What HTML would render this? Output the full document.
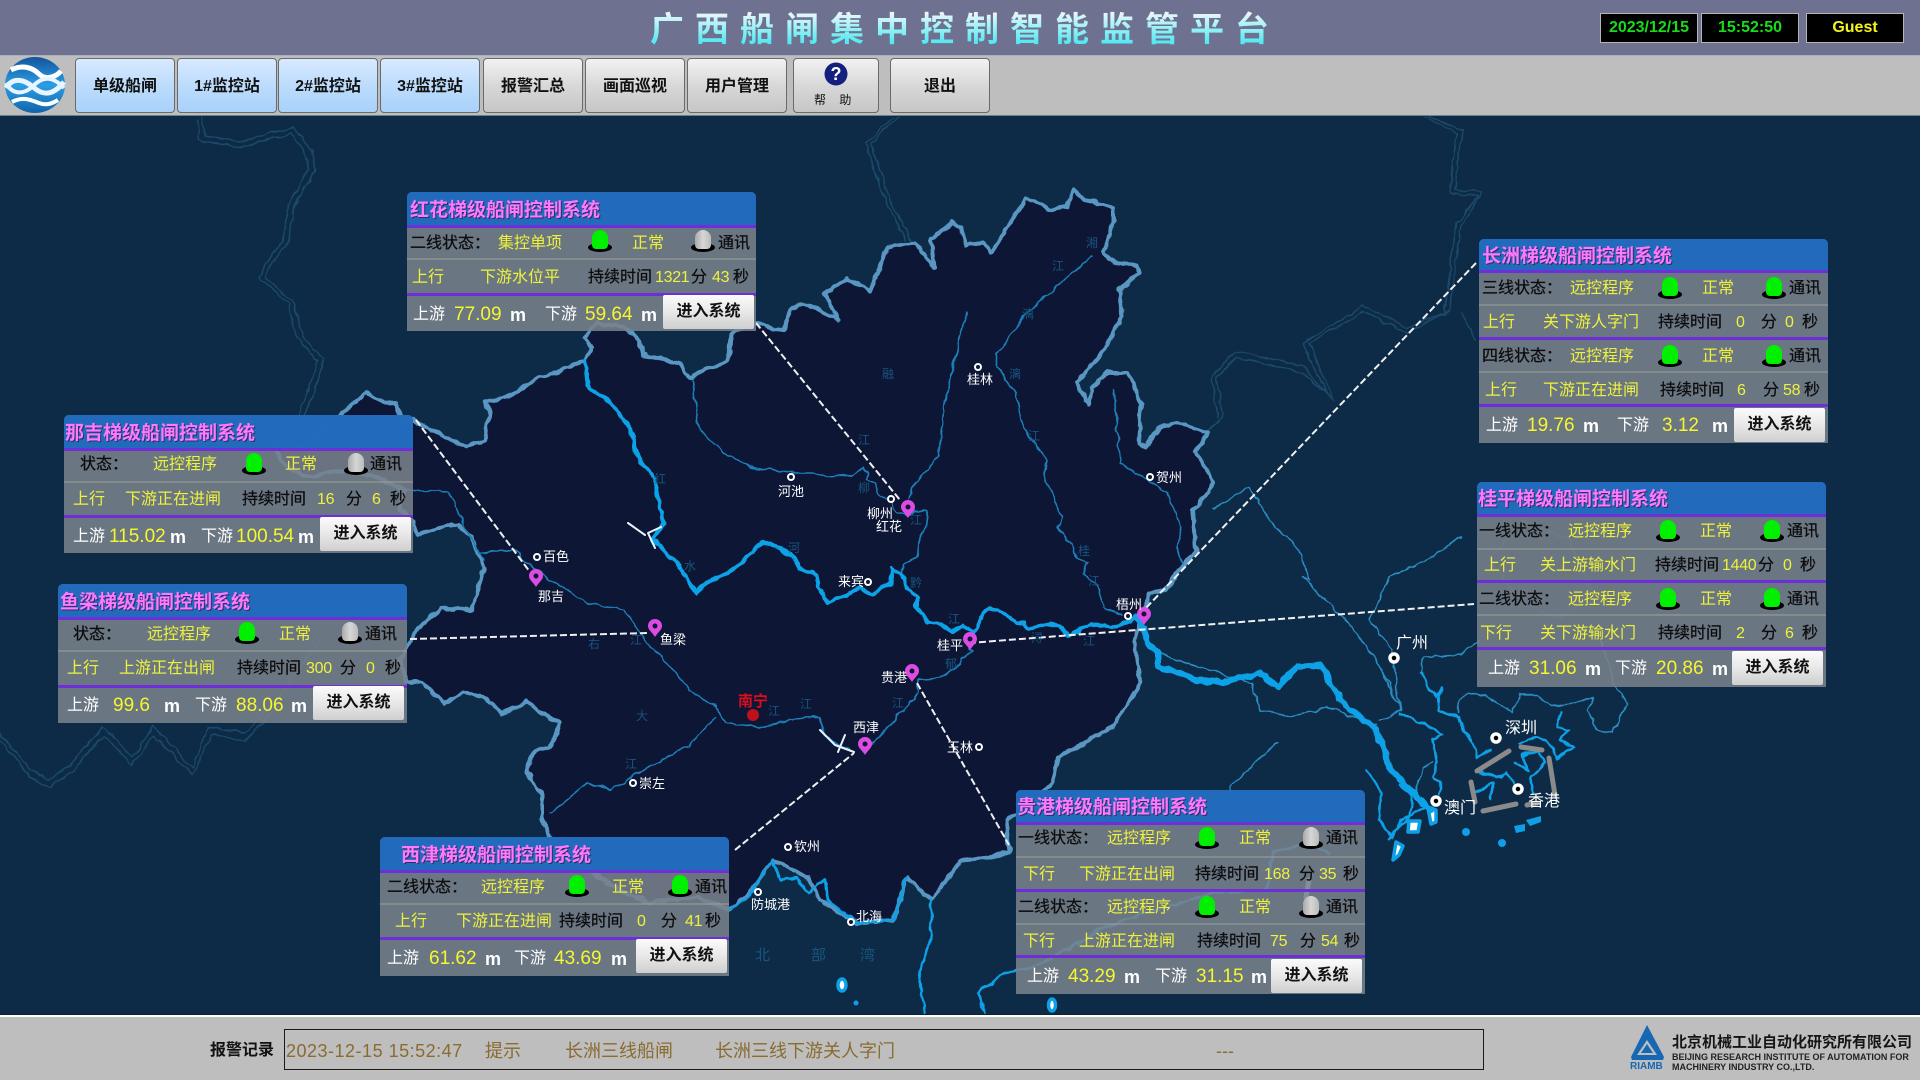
<!DOCTYPE html>
<html lang="zh-CN"><head><meta charset="utf-8"><title>广西船闸集中控制智能监管平台</title>
<style>
*{box-sizing:border-box}
html,body{margin:0;padding:0;width:1920px;height:1080px;overflow:hidden;background:#0d2b47;font-family:"Liberation Sans","Noto Sans CJK SC",sans-serif}
.abs{position:absolute}
#hd{position:absolute;left:0;top:0;width:1920px;height:55px;background:#6e7290}
#ttl{position:absolute;left:650px;top:7px;font:700 34px/46px "Liberation Sans","Noto Sans CJK SC",sans-serif;letter-spacing:11px;white-space:nowrap;background:linear-gradient(#e4f7fb 15%,#8ff0f5 50%,#2fe3ef 95%);-webkit-background-clip:text;background-clip:text;color:transparent}
.tb{position:absolute;top:13px;height:30px;width:98px;background:#000;border:1px solid #b5b5b5;text-align:center;font:700 16px/28px "Liberation Sans",sans-serif}
#bar{position:absolute;left:0;top:55px;width:1920px;height:61px;background:#bebebe;border-top:1px solid #aab0c0;border-bottom:1px solid #6f7f8c}
.btn{position:absolute;top:58px;height:55px;width:100px;border:1px solid #6a6a6a;border-radius:4px;text-align:center;font:700 16px/55px "Liberation Sans","Noto Sans CJK SC",sans-serif;color:#111;background:linear-gradient(#f2f2f2,#d8d8d8 50%,#c6c6c6)}
.bl{background:linear-gradient(#d8eaff,#bcdcfc 50%,#a9d1fa)}
#ft{position:absolute;left:0;top:1015px;width:1920px;height:65px;background:#bebebe;border-top:2px solid #fff}
#ft:before{content:"";position:absolute;left:0;top:-3px;width:100%;height:1px;background:#10202e}
.alm{position:absolute;top:1040px;font-size:18px;line-height:22px;color:#8a6b30;white-space:nowrap}
.p{position:absolute;width:349px;background:rgba(122,130,140,.87);border-radius:5px 5px 0 0;color:#111}
.h{position:absolute;left:0;top:0;width:100%;background:rgba(32,106,190,.97);border-radius:5px 5px 0 0}
.tt{position:absolute;top:7px;font:700 19px/24px "Liberation Sans","Noto Sans CJK SC",sans-serif;color:#ff78ff;text-shadow:1px 1px 0 #2c2f60;white-space:nowrap}
.pl{position:absolute;left:0;width:100%;height:3px;background:#6f2fd8}
.fl{position:absolute;left:0;width:100%;height:2px;background:rgba(150,155,150,.6)}
.r{position:absolute;left:0;width:100%;height:20px}
.r i{position:absolute;top:1px;font-style:normal;font-size:16px;line-height:20px;white-space:nowrap}
.k{color:#0c0c0c;-webkit-text-stroke:.25px #0c0c0c}.y{color:#eef23a}
.r i.s{font-size:16px;color:#0c0c0c;-webkit-text-stroke:.25px #0c0c0c}
.r i.n{font-size:16px;letter-spacing:-.3px;color:#eef23a}
.r i.w{top:2px;color:#fff;font-size:16px}
.r i.v{top:2px;color:#f6f62e;font-size:19px}
.r i.m{top:2px;color:#fff;font-weight:700;font-size:18px}
.l{position:absolute;top:-1px;width:24px;height:24px}
.l:before{content:"";position:absolute;left:0;top:13px;width:24px;height:9px;border-radius:50%;background:#000}
.l:after{content:"";position:absolute;left:4px;top:0;width:16px;height:19px;border-radius:8px 8px 4px 4px;background:#00f000}
.l.o:after{background:linear-gradient(90deg,#aaa,#d6d6d6 50%,#bbb)}
.e{position:absolute;width:91px;height:34px;background:linear-gradient(#fbfbfb,#e8e8e8 50%,#cfcfcf);border-radius:2px;text-align:center;font:700 16px/34px "Liberation Sans","Noto Sans CJK SC",sans-serif;color:#111}
svg text{font-family:"Liberation Sans","Noto Sans CJK SC",sans-serif}
</style></head><body>

<svg class="abs" style="left:0;top:0" width="1920" height="1080" viewBox="0 0 1920 1080" fill="none" stroke-linejoin="round" stroke-linecap="round">
<defs>
<filter id="bump" filterUnits="userSpaceOnUse" x="0" y="100" width="1920" height="930"><feTurbulence type="fractalNoise" baseFrequency=".09" numOctaves="2" seed="4"/><feDisplacementMap in="SourceGraphic" scale="6" xChannelSelector="R" yChannelSelector="G"/></filter>
</defs>
<!-- faint neighbours -->
<g stroke="#1b4a68" stroke-width="1.5" filter="url(#bump)">
<path d="M202 117L205 135 239 142 294 127 312 153 315 170 294 207 288 243 269 267 265 277 294 303 303 337 324 360 318 380 300 430"/>
<path d="M197 120L200 140 239 148 292 133 306 155 309 170 288 207 282 243 263 267 259 277 288 303 297 337 318 362 312 380 294 430"/>
<path d="M894 117L866 143 882 193 906 240"/><path d="M899 117L871 143 887 193 911 240"/>
<path d="M1425 117L1456 133 1450 193 1477 197 1456 223 1444 313 1407 333 1364 312 1309 343 1333 400 1303 373 1236 357 1217 377 1223 417 1208 430"/>
<path d="M1430 117L1462 130 1455 190 1482 192 1461 225 1449 310 1407 328 1364 306 1303 343 1327 395 1303 366 1236 351 1212 377 1218 417"/>
<path d="M0 733L30 770 49 780 67 767 104 727 132 757 153 727 193 767 208 727 245 733 275 703 320 640"/>
<path d="M0 740L30 777 49 787 72 772 104 735 132 765 153 735 193 775 212 735 245 741 280 705"/>
<path d="M1520 520L1570 540 1590 590 1560 620 1520 600 1490 560 1530 510"/>
<path d="M1462 313L1474 340"/>
</g>
<!-- Guangxi -->
<path filter="url(#bump)" fill="#0b1836" stroke="#5a96c2" stroke-width="4" d="M272 443 290 438 300 448 325 430 346 410 367 392 383 403 395 402 401 417 416 422 438 433 465 447 484 440 490 410 484 402 508 397 539 378 557 372 585 360 591 348 585 337 597 323 625 327 640 340 643 355 680 363 689 378 713 367 729 360 732 333 753 323 784 330 790 310 802 303 839 320 824 293 848 278 870 290 888 247 915 243 934 267 931 240 952 222 960 227 966 245 984 243 991 253 1021 207 1027 198 1049 210 1067 207 1073 190 1085 200 1113 207 1113 223 1104 253 1113 263 1138 265 1138 273 1119 290 1122 317 1104 350 1076 383 1089 405 1092 387 1107 373 1128 373 1141 403 1138 443 1147 447 1159 427 1177 423 1208 432 1196 453 1214 483 1193 510 1196 550 1180 570 1165 590 1150 593 1141 617 1135 643 1141 683 1113 727 1058 757 1052 783 1021 813 1006 820 1009 853 991 857 960 862 931 900 906 877 894 920 857 923 820 900 808 877 772 860 753 890 729 910 698 897 649 902 625 893 588 870 551 838 542 820 542 793 527 773 533 753 551 747 560 723 542 713 527 702 502 713 484 697 462 693 444 703 423 683 407 682 400 660 416 630 441 608 471 610 481 580 484 567 471 537 459 525 441 527 416 535 413 523 400 510 404 490 380 478 340 470 306 477 285 465Z"/>
<!-- internal rivers -->
<g stroke="#1f7fb8" stroke-width="1.6" filter="url(#bump)">
<path d="M692 380 698 427 723 453 753 467 790 472 813 472 827 477 853 475 863 467 868 472 867 480 875 483 878 493 892 503 895 512 908 517 915 510 927 512 925 527 920 537 918 557 903 565 902 573"/>
<path d="M967 312 955 360 945 400 940 440 940 455 927 470 912 487 908 498"/>
<path d="M1092 257 1064 280 1027 313 997 353 997 367 1015 393 1021 420 1032 440 1047 460 1043 473 1062 517 1058 528 1075 550 1077 558 1088 563 1083 573 1100 590 1103 607 1122 615"/>
<path d="M1113 390 1118 440 1120 463 1143 477 1167 493 1182 527 1177 547 1182 565"/>
<path d="M970 650 973 653 962 657 957 667 940 678 918 680 918 693 876 740 865 748"/>
<path d="M404 490 450 492 466 530 484 560"/>
<path d="M478 553 514 550 536 570 551 580 588 603 625 610 645 640 667 663 690 690 716 707 726 723 759 727 790 720 820 717 824 737 850 750"/>
<path d="M716 717 690 745 667 757 637 773 612 790 588 783 551 813"/>
</g>
<!-- outer east rivers -->
<g stroke="#2a8cc0" stroke-width="1.5" filter="url(#bump)">
<path d="M1214 508 1248 487 1275 527 1300 550 1309 580 1303 577 1327 603 1352 627 1376 660 1401 710"/>
<path d="M1462 537 1432 557 1389 577 1370 620 1392 650 1400 710"/>
<path d="M1160 653 1200 668 1251 683 1260 710 1291 717 1327 707 1376 725"/>
<path d="M1278 742 1229 787 1236 813"/>
<path d="M1380 668 1390 683 1400 710 1380 720"/>
<path d="M1420 672 1425 657 1460 655 1480 640"/>
<path d="M1433 762 1423 768 1415 793M1380 733 1393 767"/>
<path d="M1457 713 1458 703 1467 693 1487 697 1512 712 1520 695 1537 695 1550 707 1577 703 1593 697 1587 710 1597 730 1613 732 1627 703 1613 683 1610 667 1600 640"/>
</g>
<!-- bright coast & delta -->
<g stroke="#0ea0e6" stroke-width="2.6" filter="url(#bump)">
<path d="M729 910 745 900 753 890 772 860 780 880 796 877 808 893 824 880 827 900 857 923 894 920 906 877"/>
<path d="M931 900 931 937 919 973 925 1013"/>
<path d="M984 1015 978 993 1000 975 1040 965 1104 927 1144 913 1217 893 1266 890 1272 853 1303 843 1330 853"/>
<path d="M1367 770 1382 793 1379 820 1392 837 1401 820 1425 807"/>
<path d="M1422 672 1430 690 1437 697 1442 688 1437 710 1458 718 1475 750 1477 758 1490 750"/>
<path d="M1400 713 1420 722 1442 735 1433 740 1437 763 1433 777 1442 783 1438 795"/>
<path d="M1400 785 1412 797 1410 817 1388 838"/>
<path d="M1562 712 1557 728 1568 730 1560 740 1573 747 1557 758 1547 740 1537 737 1520 743"/>
<path d="M1480 772 1497 778 1507 773 1513 783M1475 793 1493 783 1490 798M1515 762 1527 770 1522 755 1537 752 1545 763 1530 777 1533 793"/>
</g>
<path d="M1309 880 1306 897" stroke="#cfe6f5" stroke-width="5"/>
<!-- islands -->
<g fill="#fff" stroke="#0ea0e6" stroke-width="3.5">
<path d="M1428 808 1436 810 1436 822 1431 824Z"/><path d="M1409 821 1420 821 1418 832 1408 832Z"/><path d="M1396 842 1403 846 1399 855 1393 860Z"/><ellipse cx="842" cy="985" rx="4" ry="6"/><ellipse cx="1052" cy="1005" rx="3.5" ry="6"/>
</g>
<g fill="#0ea0e6"><circle cx="1466" cy="832" r="4"/><circle cx="1502" cy="843" r="4"/><path d="M1514 826 1525 824 1525 831 1516 833Z"/><path d="M1526 820 1541 816 1541 822 1530 826Z"/><circle cx="856" cy="1003" r="2.5"/></g>
<!-- main river -->
<g stroke="#0ba2e8" filter="url(#bump)">
<path stroke-width="4" d="M585 360 588 387 612 403 631 430 637 457 655 480 658 497 664 523 652 540 680 567 695 592 716 577 729 573 744 560 762 542 780 548 788 553 800 568 817 575 818 587 828 603 860 588 872 595 890 583 892 568 905 578 908 590 917 597 917 607 928 623 942 625 953 632 963 625 972 633 975 630 988 608 997 610 1003 613 1017 622 1025 623 1028 630 1052 624 1063 628 1068 637 1080 630 1095 624 1110 628 1137 618"/>
<path stroke-width="6" d="M1137 618 1143 627 1148 643 1158 653 1158 667 1180 673 1200 680 1223 682 1260 673 1278 687 1297 667 1321 665 1340 700 1376 730 1389 767 1413 793 1431 810"/>
</g>
<path stroke="#e8f6ff" stroke-width="2" d="M628 523 645 535M661 527 648 533 655 548M820 730 835 745 854 752M838 752 845 735"/>
<!-- hk grey -->
<g stroke="#8a8a8a" stroke-width="5"><path d="M1477 771 1509 751M1521 747 1542 750M1549 758 1555 795M1471 782 1475 802M1483 811 1516 804M1527 805 1537 803"/></g>
<!-- dashed -->
<g stroke="#f0f0f0" stroke-width="2" stroke-dasharray="7 3" stroke-linecap="butt">
<path d="M756 323 900 500M416 420 530 572M410 639 649 633M735 850 854 753M917 683 1009 845M969 643 1474 604M1476 263 1144 610"/>
</g>
<!-- pins -->
<g fill="#dc4be2">
<path transform="translate(908 518)" d="M0 0C-3-5-7-7-7-11a7 7 0 1 1 14 0C7-7 3-5 0 0Z"/>
<path transform="translate(536 587)" d="M0 0C-3-5-7-7-7-11a7 7 0 1 1 14 0C7-7 3-5 0 0Z"/>
<path transform="translate(655 637)" d="M0 0C-3-5-7-7-7-11a7 7 0 1 1 14 0C7-7 3-5 0 0Z"/>
<path transform="translate(970 650)" d="M0 0C-3-5-7-7-7-11a7 7 0 1 1 14 0C7-7 3-5 0 0Z"/>
<path transform="translate(1144 625)" d="M0 0C-3-5-7-7-7-11a7 7 0 1 1 14 0C7-7 3-5 0 0Z"/>
<path transform="translate(912 682)" d="M0 0C-3-5-7-7-7-11a7 7 0 1 1 14 0C7-7 3-5 0 0Z"/>
<path transform="translate(865 755)" d="M0 0C-3-5-7-7-7-11a7 7 0 1 1 14 0C7-7 3-5 0 0Z"/>
</g>
<g fill="#0b1836"><circle cx="908" cy="507" r="2.5"/><circle cx="536" cy="576" r="2.5"/><circle cx="655" cy="626" r="2.5"/><circle cx="970" cy="639" r="2.5"/><circle cx="1144" cy="614" r="2.5"/><circle cx="912" cy="671" r="2.5"/><circle cx="865" cy="744" r="2.5"/></g>
<!-- city dots -->
<g fill="#0b1836" stroke="#fff" stroke-width="2">
<circle cx="537" cy="557" r="3"/><circle cx="791" cy="477" r="3"/><circle cx="891" cy="499" r="3"/><circle cx="978" cy="367" r="3"/><circle cx="1150" cy="477" r="3"/><circle cx="868" cy="582" r="3"/><circle cx="633" cy="783" r="3"/><circle cx="788" cy="847" r="3"/><circle cx="758" cy="892" r="3"/><circle cx="851" cy="922" r="3"/><circle cx="979" cy="747" r="3"/><circle cx="1128" cy="616" r="3"/>
</g>
<g fill="#000" stroke="#fff" stroke-width="3.5"><circle cx="1394" cy="658" r="4"/><circle cx="1496" cy="738" r="4"/><circle cx="1518" cy="789" r="4"/><circle cx="1436" cy="801" r="4"/></g>
<circle cx="753" cy="715" r="6" fill="#c0101c"/>
<!-- labels -->
<g fill="#fff" font-size="13">
<text x="543" y="561">百色</text><text x="778" y="496">河池</text><text x="867" y="518">柳州</text><text x="876" y="531">红花</text><text x="967" y="384">桂林</text><text x="1156" y="482">贺州</text><text x="838" y="586">来宾</text><text x="538" y="601">那吉</text><text x="660" y="644">鱼梁</text><text x="853" y="732">西津</text><text x="881" y="682">贵港</text><text x="937" y="650">桂平</text><text x="639" y="788">崇左</text><text x="794" y="851">钦州</text><text x="751" y="909">防城港</text><text x="856" y="921">北海</text><text x="947" y="752">玉林</text><text x="1116" y="609">梧州</text>
</g>
<g fill="#fff" font-size="16"><text x="1396" y="648">广州</text><text x="1505" y="733">深圳</text><text x="1528" y="806">香港</text><text x="1444" y="813">澳门</text></g>
<text x="738" y="706" fill="#e00c1c" font-size="15" font-weight="700">南宁</text>
<g fill="#17557f" font-size="12">
<text x="654" y="483">红</text><text x="684" y="570">水</text><text x="788" y="552">河</text><text x="858" y="492">柳</text><text x="910" y="524">江</text><text x="910" y="587">黔</text><text x="948" y="623">江</text><text x="1031" y="642">浔</text><text x="1083" y="645">江</text><text x="1078" y="555">桂</text><text x="1088" y="585">江</text><text x="1086" y="247">湘</text><text x="1052" y="270">江</text><text x="1022" y="318">漓</text><text x="1009" y="378">漓</text><text x="1028" y="440">江</text><text x="882" y="378">融</text><text x="858" y="444">江</text><text x="588" y="648">右</text><text x="636" y="720">大</text><text x="625" y="768">江</text><text x="630" y="644">江</text><text x="768" y="715">江</text><text x="800" y="708">江</text><text x="945" y="668">郁</text><text x="892" y="707">江</text>
</g>
<g fill="#17557f" font-size="15"><text x="755" y="960">北</text><text x="811" y="960">部</text><text x="860" y="960">湾</text></g>
</svg>

<div id="hd"></div>
<div id="ttl">广西船闸集中控制智能监管平台</div>
<div class="tb" style="left:1600px;color:#19dc19">2023/12/15</div>
<div class="tb" style="left:1701px;color:#19dc19">15:52:50</div>
<div class="tb" style="left:1806px;color:#f4f41c">Guest</div>

<div id="bar"></div>
<svg class="abs" style="left:3px;top:56px" width="66" height="58" viewBox="0 0 66 58">
<defs><linearGradient id="lg" x1="0" y1="0" x2="0" y2="1"><stop offset="0" stop-color="#14549c"/><stop offset=".5" stop-color="#2a9ee4"/><stop offset="1" stop-color="#1264ac"/></linearGradient></defs>
<ellipse cx="32" cy="29" rx="30" ry="28" fill="url(#lg)"/>
<path d="M8 14C20 8 30 12 36 18S52 22 58 15" stroke="#fff" stroke-width="5" fill="none"/>
<path d="M3 32C10 20 22 24 30 31S48 42 61 26" stroke="#e8f4ff" stroke-width="5" fill="none"/>
<path d="M3 27C10 40 22 38 30 30S48 18 61 32" stroke="#e8f4ff" stroke-width="4" fill="none"/>
<path d="M9 46C20 40 28 44 36 47S50 47 55 44" stroke="#fff" stroke-width="4" fill="none"/>
</svg>
<div class="btn bl" style="left:75px">单级船闸</div>
<div class="btn bl" style="left:177px">1#监控站</div>
<div class="btn bl" style="left:278px">2#监控站</div>
<div class="btn bl" style="left:380px">3#监控站</div>
<div class="btn" style="left:483px">报警汇总</div>
<div class="btn" style="left:585px">画面巡视</div>
<div class="btn" style="left:687px">用户管理</div>
<div class="btn" style="left:793px;width:86px"></div>
<svg class="abs" style="left:823px;top:62px" width="26" height="24" viewBox="0 0 26 24"><circle cx="13" cy="12" r="11.5" fill="#14207e"/><text x="13" y="18" text-anchor="middle" fill="#fff" font-size="18" font-weight="700" style="font-family:'Liberation Sans',sans-serif">?</text></svg>
<div class="abs" style="left:814px;top:92px;font-size:12px;line-height:16px;color:#111;white-space:nowrap">帮&nbsp;&nbsp;&nbsp;&nbsp;助</div>
<div class="btn" style="left:890px">退出</div>

<!-- 红花 -->
<div class="p" style="left:407px;top:192px;height:139px"><div class="h" style="height:33px"></div><div class="tt" style="left:3px">红花梯级船闸控制系统</div><div class="pl" style="top:33px"></div><div class="fl" style="top:66px"></div><div class="pl" style="top:101px"></div>
<div class="r" style="top:41px"><i class="s" style="left:3px">二线状态：</i><i class="y" style="left:91px">集控单项</i><b class="l" style="left:181px;top:-3px"></b><i class="y" style="left:225px">正常</i><b class="l o" style="left:284px;top:-3px"></b><i class="s" style="left:311px">通讯</i></div>
<div class="r" style="top:75px"><i class="y" style="left:5px">上行</i><i class="y" style="left:73px">下游水位平</i><i class="k" style="left:181px">持续时间</i><i class="n" style="left:248px">1321</i><i class="k" style="left:284px">分</i><i class="n" style="left:305px">43</i><i class="k" style="left:326px">秒</i></div>
<div class="r" style="top:111px"><i class="w" style="left:6px">上游</i><i class="v" style="left:47px">77.09</i><i class="m" style="left:103px">m</i><i class="w" style="left:138px">下游</i><i class="v" style="left:178px">59.64</i><i class="m" style="left:234px">m</i></div>
<div class="e" style="left:256px;top:103px">进入系统</div></div>

<!-- 那吉 -->
<div class="p" style="left:64px;top:415px;height:138px"><div class="h" style="height:33px"></div><div class="tt" style="left:1px">那吉梯级船闸控制系统</div><div class="pl" style="top:33px"></div><div class="fl" style="top:66px"></div><div class="pl" style="top:100px"></div>
<div class="r" style="top:39px"><i class="s" style="left:16px">状态：</i><i class="y" style="left:89px">远控程序</i><b class="l" style="left:178px"></b><i class="y" style="left:221px">正常</i><b class="l o" style="left:280px"></b><i class="s" style="left:306px">通讯</i></div>
<div class="r" style="top:74px"><i class="y" style="left:9px">上行</i><i class="y" style="left:61px">下游正在进闸</i><i class="k" style="left:178px">持续时间</i><i class="n" style="left:253px">16</i><i class="k" style="left:282px">分</i><i class="n" style="left:308px">6</i><i class="k" style="left:326px">秒</i></div>
<div class="r" style="top:110px"><i class="w" style="left:9px">上游</i><i class="v" style="left:45px">115.02</i><i class="m" style="left:106px">m</i><i class="w" style="left:137px">下游</i><i class="v" style="left:172px">100.54</i><i class="m" style="left:234px">m</i></div>
<div class="e" style="left:256px;top:102px">进入系统</div></div>

<!-- 鱼梁 -->
<div class="p" style="left:58px;top:584px;height:139px"><div class="h" style="height:33px"></div><div class="tt" style="left:2px">鱼梁梯级船闸控制系统</div><div class="pl" style="top:33px"></div><div class="fl" style="top:66px"></div><div class="pl" style="top:101px"></div>
<div class="r" style="top:40px"><i class="s" style="left:15px">状态：</i><i class="y" style="left:89px">远控程序</i><b class="l" style="left:177px;top:-2px"></b><i class="y" style="left:221px">正常</i><b class="l o" style="left:280px;top:-2px"></b><i class="s" style="left:307px">通讯</i></div>
<div class="r" style="top:74px"><i class="y" style="left:9px">上行</i><i class="y" style="left:61px">上游正在出闸</i><i class="k" style="left:179px">持续时间</i><i class="n" style="left:248px">300</i><i class="k" style="left:282px">分</i><i class="n" style="left:308px">0</i><i class="k" style="left:327px">秒</i></div>
<div class="r" style="top:110px"><i class="w" style="left:9px">上游</i><i class="v" style="left:55px">99.6</i><i class="m" style="left:106px">m</i><i class="w" style="left:137px">下游</i><i class="v" style="left:178px">88.06</i><i class="m" style="left:233px">m</i></div>
<div class="e" style="left:255px;top:102px">进入系统</div></div>

<!-- 西津 -->
<div class="p" style="left:380px;top:837px;height:139px"><div class="h" style="height:33px"></div><div class="tt" style="left:21px">西津梯级船闸控制系统</div><div class="pl" style="top:33px"></div><div class="fl" style="top:66px"></div><div class="pl" style="top:100px"></div>
<div class="r" style="top:40px"><i class="s" style="left:7px">二线状态：</i><i class="y" style="left:101px">远控程序</i><b class="l" style="left:185px;top:-2px"></b><i class="y" style="left:232px">正常</i><b class="l" style="left:288px;top:-2px"></b><i class="s" style="left:315px">通讯</i></div>
<div class="r" style="top:74px"><i class="y" style="left:15px">上行</i><i class="y" style="left:76px">下游正在进闸</i><i class="k" style="left:179px">持续时间</i><i class="n" style="left:257px">0</i><i class="k" style="left:281px">分</i><i class="n" style="left:305px">41</i><i class="k" style="left:325px">秒</i></div>
<div class="r" style="top:110px"><i class="w" style="left:7px">上游</i><i class="v" style="left:49px">61.62</i><i class="m" style="left:105px">m</i><i class="w" style="left:134px">下游</i><i class="v" style="left:174px">43.69</i><i class="m" style="left:231px">m</i></div>
<div class="e" style="left:256px;top:102px">进入系统</div></div>

<!-- 长洲 -->
<div class="p" style="left:1479px;top:239px;height:204px"><div class="h" style="height:32px"></div><div class="tt" style="left:3px;top:6px">长洲梯级船闸控制系统</div><div class="pl" style="top:31px"></div><div class="fl" style="top:65px"></div><div class="pl" style="top:98px"></div><div class="fl" style="top:132px"></div><div class="pl" style="top:165px"></div>
<div class="r" style="top:39px"><i class="s" style="left:3px">三线状态：</i><i class="y" style="left:91px">远控程序</i><b class="l" style="left:179px"></b><i class="y" style="left:223px">正常</i><b class="l" style="left:283px"></b><i class="s" style="left:310px">通讯</i></div>
<div class="r" style="top:73px"><i class="y" style="left:4px">上行</i><i class="y" style="left:64px">关下游人字门</i><i class="k" style="left:179px">持续时间</i><i class="n" style="left:257px">0</i><i class="k" style="left:282px">分</i><i class="n" style="left:306px">0</i><i class="k" style="left:323px">秒</i></div>
<div class="r" style="top:107px"><i class="s" style="left:3px">四线状态：</i><i class="y" style="left:91px">远控程序</i><b class="l" style="left:179px"></b><i class="y" style="left:223px">正常</i><b class="l" style="left:283px"></b><i class="s" style="left:310px">通讯</i></div>
<div class="r" style="top:141px"><i class="y" style="left:6px">上行</i><i class="y" style="left:64px">下游正在进闸</i><i class="k" style="left:181px">持续时间</i><i class="n" style="left:258px">6</i><i class="k" style="left:284px">分</i><i class="n" style="left:304px">58</i><i class="k" style="left:325px">秒</i></div>
<div class="r" style="top:175px"><i class="w" style="left:7px">上游</i><i class="v" style="left:48px">19.76</i><i class="m" style="left:104px">m</i><i class="w" style="left:138px">下游</i><i class="v" style="left:183px">3.12</i><i class="m" style="left:233px">m</i></div>
<div class="e" style="left:255px;top:169px">进入系统</div></div>

<!-- 桂平 -->
<div class="p" style="left:1477px;top:482px;height:205px"><div class="h" style="height:32px"></div><div class="tt" style="left:1px;top:6px">桂平梯级船闸控制系统</div><div class="pl" style="top:32px"></div><div class="fl" style="top:66px"></div><div class="pl" style="top:98px"></div><div class="fl" style="top:132px"></div><div class="pl" style="top:165px"></div>
<div class="r" style="top:39px"><i class="s" style="left:2px">一线状态：</i><i class="y" style="left:91px">远控程序</i><b class="l" style="left:179px"></b><i class="y" style="left:223px">正常</i><b class="l" style="left:283px"></b><i class="s" style="left:310px">通讯</i></div>
<div class="r" style="top:73px"><i class="y" style="left:7px">上行</i><i class="y" style="left:63px">关上游输水门</i><i class="k" style="left:178px">持续时间</i><i class="n" style="left:245px">1440</i><i class="k" style="left:281px">分</i><i class="n" style="left:306px">0</i><i class="k" style="left:323px">秒</i></div>
<div class="r" style="top:107px"><i class="s" style="left:2px">二线状态：</i><i class="y" style="left:91px">远控程序</i><b class="l" style="left:179px"></b><i class="y" style="left:223px">正常</i><b class="l" style="left:283px"></b><i class="s" style="left:310px">通讯</i></div>
<div class="r" style="top:141px"><i class="y" style="left:3px">下行</i><i class="y" style="left:63px">关下游输水门</i><i class="k" style="left:181px">持续时间</i><i class="n" style="left:259px">2</i><i class="k" style="left:284px">分</i><i class="n" style="left:308px">6</i><i class="k" style="left:325px">秒</i></div>
<div class="r" style="top:175px"><i class="w" style="left:11px">上游</i><i class="v" style="left:52px">31.06</i><i class="m" style="left:108px">m</i><i class="w" style="left:138px">下游</i><i class="v" style="left:179px">20.86</i><i class="m" style="left:235px">m</i></div>
<div class="e" style="left:255px;top:169px">进入系统</div></div>

<!-- 贵港 -->
<div class="p" style="left:1016px;top:790px;height:204px"><div class="h" style="height:32px"></div><div class="tt" style="left:1px;top:6px">贵港梯级船闸控制系统</div><div class="pl" style="top:32px"></div><div class="fl" style="top:66px"></div><div class="pl" style="top:99px"></div><div class="fl" style="top:133px"></div><div class="pl" style="top:165px"></div>
<div class="r" style="top:38px"><i class="s" style="left:2px">一线状态：</i><i class="y" style="left:91px">远控程序</i><b class="l" style="left:179px"></b><i class="y" style="left:223px">正常</i><b class="l o" style="left:283px"></b><i class="s" style="left:310px">通讯</i></div>
<div class="r" style="top:74px"><i class="y" style="left:7px">下行</i><i class="y" style="left:63px">下游正在出闸</i><i class="k" style="left:179px">持续时间</i><i class="n" style="left:248px">168</i><i class="k" style="left:283px">分</i><i class="n" style="left:303px">35</i><i class="k" style="left:327px">秒</i></div>
<div class="r" style="top:107px"><i class="s" style="left:2px">二线状态：</i><i class="y" style="left:91px">远控程序</i><b class="l" style="left:179px"></b><i class="y" style="left:223px">正常</i><b class="l o" style="left:283px"></b><i class="s" style="left:310px">通讯</i></div>
<div class="r" style="top:141px"><i class="y" style="left:7px">下行</i><i class="y" style="left:63px">上游正在进闸</i><i class="k" style="left:181px">持续时间</i><i class="n" style="left:254px">75</i><i class="k" style="left:284px">分</i><i class="n" style="left:305px">54</i><i class="k" style="left:328px">秒</i></div>
<div class="r" style="top:175px"><i class="w" style="left:11px">上游</i><i class="v" style="left:52px">43.29</i><i class="m" style="left:108px">m</i><i class="w" style="left:139px">下游</i><i class="v" style="left:180px">31.15</i><i class="m" style="left:235px">m</i></div>
<div class="e" style="left:255px;top:169px">进入系统</div></div>

<div id="ft"></div>
<div class="abs" style="left:210px;top:1040px;font:700 16px/22px 'Liberation Sans','Noto Sans CJK SC',sans-serif;color:#111">报警记录</div>
<div class="abs" style="left:284px;top:1029px;width:1200px;height:41px;border:1.5px solid #1a1a1a"></div>
<div class="alm" style="left:286px;letter-spacing:.5px">2023-12-15 15:52:47</div>
<div class="alm" style="left:485px">提示</div>
<div class="alm" style="left:565px">长洲三线船闸</div>
<div class="alm" style="left:715px">长洲三线下游关人字门</div>
<div class="alm" style="left:1216px">---</div>

<svg class="abs" style="left:1630px;top:1024px" width="36" height="38" viewBox="0 0 36 38"><path d="M17 1 34 33 33 36H2L1 33Z" fill="#1668b4"/><path d="M17 16 27 31H7Z" fill="#bebebe"/><path d="M17 20 23 29H11Z" fill="#1668b4"/></svg>
<div class="abs" style="left:1630px;top:1061px;font:700 10px/11px 'Liberation Sans',sans-serif;color:#1668b4">RIAMB</div>
<div class="abs" style="left:1672px;top:1033px;font:700 15px/19px 'Liberation Sans','Noto Sans CJK SC',sans-serif;color:#151515;white-space:nowrap">北京机械工业自动化研究所有限公司</div>
<div class="abs" style="left:1672px;top:1052px;font:700 9px/10px 'Liberation Sans',sans-serif;color:#222;white-space:nowrap">BEIJING RESEARCH INSTITUTE OF AUTOMATION FOR</div>
<div class="abs" style="left:1672px;top:1062px;font:700 9px/10px 'Liberation Sans',sans-serif;color:#222;white-space:nowrap">MACHINERY INDUSTRY CO.,LTD.</div>
</body></html>
